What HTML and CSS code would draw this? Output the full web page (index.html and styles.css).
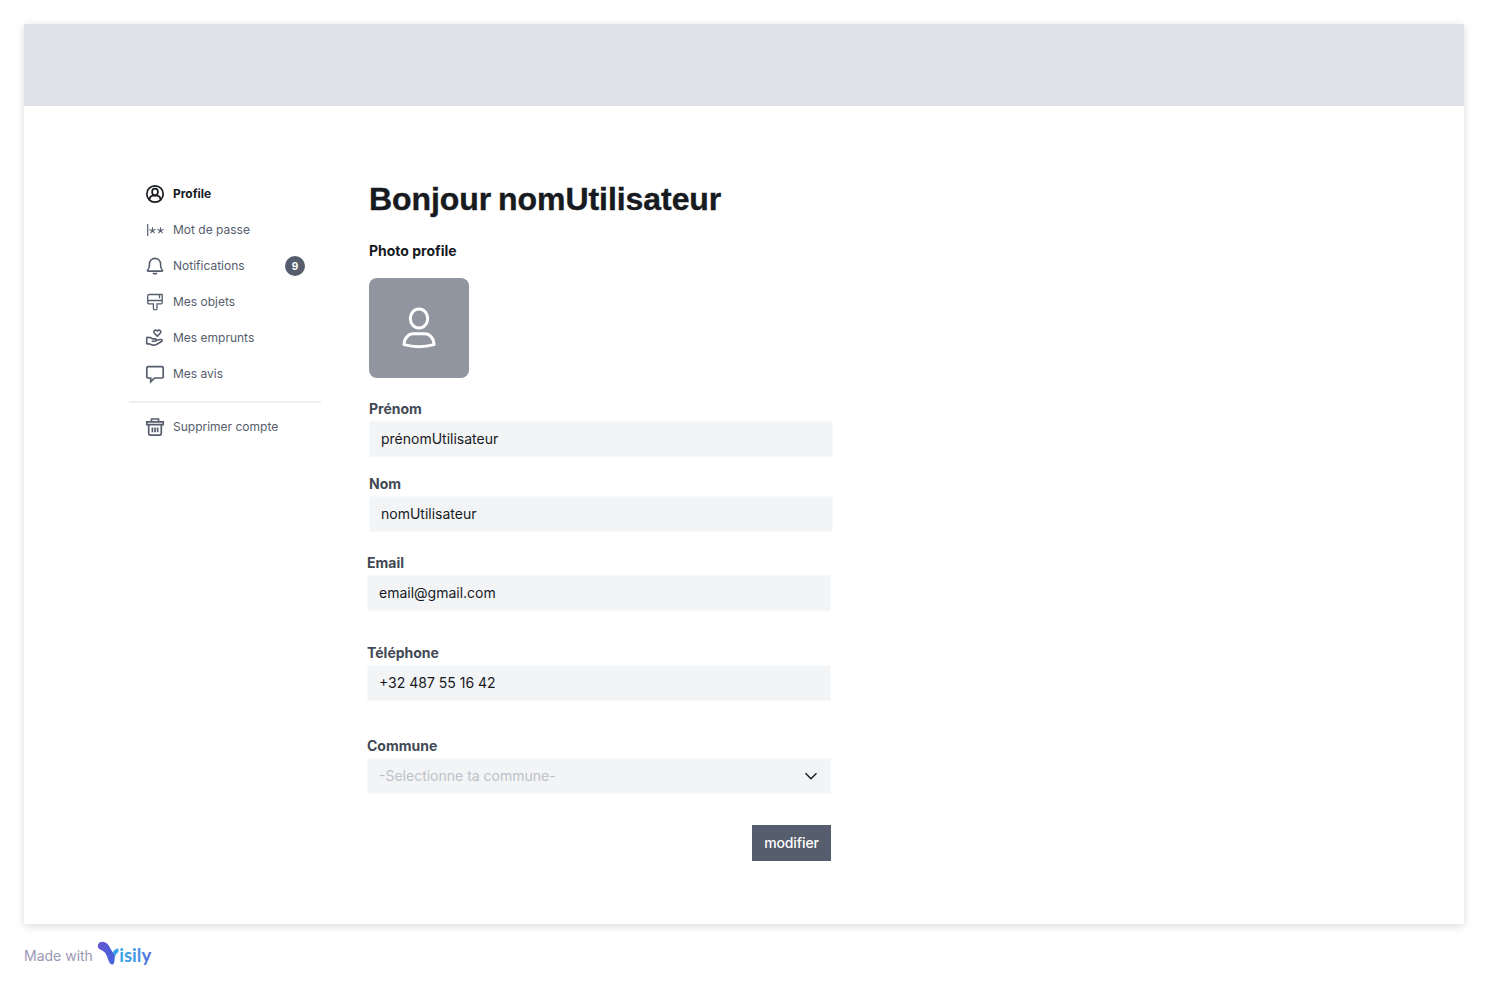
FILE: index.html
```html
<!DOCTYPE html>
<html lang="fr">
<head>
<meta charset="utf-8">
<title>Profile</title>
<link rel="stylesheet" href="styles.css">
</head>
<body>
<main class="frame">
  <header class="banner"></header>
  <div class="content">
    <nav class="sidebar">
      <a class="item active">
        <svg class="icon" viewBox="0 0 20 20"><circle cx="10" cy="10" r="8.2"/><ellipse cx="10" cy="8" rx="2.900" ry="3.300"/><path d="M4.500 15.800c.2-2.600 1.400-4 3.500-4.100h4c2.100.1 3.300 1.500 3.500 4.100"/></svg>
        <span>Profile</span></a>
      <a class="item">
        <svg class="icon thin" viewBox="0 0 20 20"><path d="M2.700 4v12"/><path class="star" d="M7.500 10.400V7.200M7.500 10.400l-3.100-1M7.500 10.400l3.100-1M7.500 10.400l-2 2.800M7.500 10.400l2 2.800M15.500 10.400V7.200M15.500 10.400l-3.100-1M15.500 10.400l3.100-1M15.500 10.400l-2 2.800M15.500 10.400l2 2.800"/></svg>
        <span>Mot de passe</span></a>
      <a class="item">
        <svg class="icon bell" viewBox="0 0 20 20"><path d="M3 15.100c-.7 0-.8-.7-.3-1.100 1.300-1.100 1.700-2.500 1.700-4.500V8a5.600 5.600 0 0 1 11.200 0v1.500c0 2 .4 3.400 1.700 4.500.5.400.4 1.100-.3 1.100z"/><path d="M8 17c.8 1.100 3.200 1.100 4 0"/></svg>
        <span>Notifications</span><b class="badge">9</b></a>
      <a class="item">
        <svg class="icon brush" viewBox="0 0 20 20"><path d="M4.200 2.500h13v8c0 .8-.5 1.300-1.200 1.300h-4v4.700c0 1.800-3.600 1.800-3.600 0v-4.700h-4c-1.200 0-1.700-.5-1.700-1.600V4.200c0-1.100.5-1.700 1.500-1.700zM2.700 8.500h14.500M14.500 2.500v3.800"/></svg>
        <span>Mes objets</span></a>
      <a class="item">
        <svg class="icon hand" viewBox="0 0 20 20"><path d="M12.300 8.300L9.200 5C7.900 3.200 10 1 12.300 3c2.300-2 4.400.2 3.100 2zM1.700 16.200V9.500c2.500-.5 4.300 0 6 1.400h2.200c1.900.1 1.900 2.300.1 2.400H6.700M11.600 12.200l3.600-.7c2-.3 2.700 1.500 1 2.300l-4.800 2.700c-1.500.8-2.700.9-4.200.4l-2.700-1H1.700"/></svg>
        <span>Mes emprunts</span></a>
      <a class="item">
        <svg class="icon" viewBox="0 0 20 20"><path d="M2.700 2.700h14.600l.9.900v9.500l-.9.900H9.700l-4 3.700V14h-3l-.9-.9V3.600z"/></svg>
        <span>Mes avis</span></a>
      <hr class="divider">
      <a class="item">
        <svg class="icon" viewBox="0 0 20 20"><path d="M1.800 4.900h16.400v2.700H1.800zM6.500 4.800V2h7v2.800M3.700 7.700v8.600c0 1.100.7 1.800 1.700 1.800h9.200c1 0 1.700-.7 1.700-1.800V7.700M7.400 10.500v4.700M10 10.500v4.700M12.600 10.500v4.700"/></svg>
        <span>Supprimer compte</span></a>
    </nav>
    <form class="form">
      <section class="identity">
        <h1 class="title">Bonjour nomUtilisateur</h1>
        <div class="photo-label">Photo profile</div>
        <div class="photo">
          <svg class="avatar" viewBox="0 0 40 44"><ellipse cx="20" cy="12.500" rx="8.700" ry="9.500"/><path d="M5 38.600c.2-6.700 4.400-10.900 9.500-10.900h11c5.100 0 9.300 4.200 9.500 10.900-9 2.500-21 2.500-30 0z"/></svg>
        </div>
        <div class="field"><div class="label">Prénom</div><div class="input">prénomUtilisateur</div></div>
        <div class="field last-name"><div class="label">Nom</div><div class="input">nomUtilisateur</div></div>
      </section>
      <div class="field email"><div class="label">Email</div><div class="input">email@gmail.com</div></div>
      <div class="field phone"><div class="label">Téléphone</div><div class="input">+32 487 55 16 42</div></div>
      <div class="field town"><div class="label">Commune</div><div class="input select"><span>-Selectionne ta commune-</span>
        <svg class="chevron" viewBox="0 0 16 16"><path d="M2.500 5.200L8 10.700l5.500-5.500"/></svg></div></div>
      <button class="submit" type="button">modifier</button>
    </form>
  </div>
</main>
<footer class="made"><span class="made-text">Made with</span>
  <svg class="logo" viewBox="0 0 56 28">
    <defs><linearGradient id="v" x1="0" y1="0" x2="1" y2="1"><stop offset="0" stop-color="#6556d0"/><stop offset="1" stop-color="#4263df"/></linearGradient>
    <linearGradient id="w" x1="0" y1="0" x2="1" y2="0"><stop offset="0" stop-color="#36a5e8"/><stop offset=".6" stop-color="#4792e6"/><stop offset="1" stop-color="#5960d5"/></linearGradient></defs>
    <path d="M13.500 21c1-7.500 3-12.500 8-12.500v3.800c-3.300 1-3.700 6.200-5.200 9.700z" fill="#36a5e8"/>
    <path d="M.8 6C.8.8 7.900.5 10.800 4.200c2.600 3.400 3.800 6.800 6.500 10.700.7 4.300.2 9.700-2.100 9.700-2.700 0-3.600-4.300-5.100-8C8.600 12.500 7 11.500 4.100 10 2 9 .8 7.700.8 6z" fill="url(#v)"/>
    <text class="logo-text" x="22.200" y="22" textLength="32" lengthAdjust="spacingAndGlyphs" fill="url(#w)">isily</text>
  </svg>
</footer>
</body>
</html>
```
FILE: styles.css
```css
* { box-sizing: border-box; }
body { margin: 0; padding: 24px; background: #fff; font-family: Inter, "Liberation Sans", sans-serif; color: #171a1f; }
.frame { width: 1440px; height: 900px; background: #fff; box-shadow: 0 2px 8px rgba(0,0,0,.15); }
.banner { height: 82px; background: #dee1e6; }
.content { display: flex; padding: 70px 0 0 105px; }
.sidebar { width: 192px; margin-right: 46px; }
.item { display: flex; align-items: center; height: 36px; padding: 0 16px; color: #565d6d; font-size: 12px; line-height: 20px; white-space: nowrap; }
.active { color: #171a1f; font-weight: 700; }
.icon { width: 20px; height: 20px; margin-right: 8px; fill: none; stroke: currentColor; stroke-width: 1.7; flex: none; }
.thin { stroke-width: 1.2; }
.star { stroke-width: 1.1; }
.bell { stroke-width: 1.6; }
.brush { stroke-width: 1.3; }
.hand { stroke-width: 1.6; stroke-linejoin: round; }
.badge { width: 20px; height: 20px; margin-left: auto; border-radius: 50%; background: #565d6d; color: #fff; font-size: 10px; text-align: center; }
.divider { height: 2px; margin: 9px 0 6px; border: 0; background: #f0f0f4; }
.form { width: 466px; }
.identity { padding-left: 2px; }
.title { margin: 0; height: 46px; font: 700 32px/46px "Liberation Sans", Arial, sans-serif; letter-spacing: -.06px; word-spacing: -2px; -webkit-text-stroke: .4px #171a1f; white-space: nowrap; }
.photo-label { margin: 18px 0 16px; font-size: 14px; font-weight: 700; line-height: 22px; }
.photo { display: flex; align-items: center; justify-content: center; width: 100px; height: 100px; margin-bottom: 20px; border-radius: 8px; background: #9095a0; }
.avatar { width: 40px; height: 44px; fill: none; stroke: #fff; stroke-width: 3; stroke-linejoin: round; }
.field { width: 464px; font-size: 14px; line-height: 22px; }
.label { margin-bottom: 1px; font-weight: 700; color: #424955; }
.input { display: flex; align-items: center; height: 36px; padding: 0 11px; background: #f3f4f6; border: 1px solid #f8f9fa; }
.last-name { margin-top: 16px; }
.email { margin-top: 20px; }
.phone { margin-top: 31px; }
.town { margin-top: 34px; }
.select { justify-content: space-between; color: #bdc1ca; }
.chevron { width: 16px; height: 16px; fill: none; stroke: #171a1f; stroke-width: 1.5; }
.submit { display: block; width: 79px; height: 36px; margin: 31px 2px 0 auto; padding: 0; border: 0; background: #565d6d; color: #fff; font: 500 14px/22px Inter, sans-serif; letter-spacing: -.12px; }
.made { display: flex; align-items: center; height: 28px; margin-top: 16px; color: #9c98b3; font-size: 14px; }
.made-text { width: 73px; padding-top: 4px; line-height: 20px; white-space: nowrap; }
.logo { width: 56px; height: 28px; }
.logo-text { font: 700 19px Lato, sans-serif; }
```
